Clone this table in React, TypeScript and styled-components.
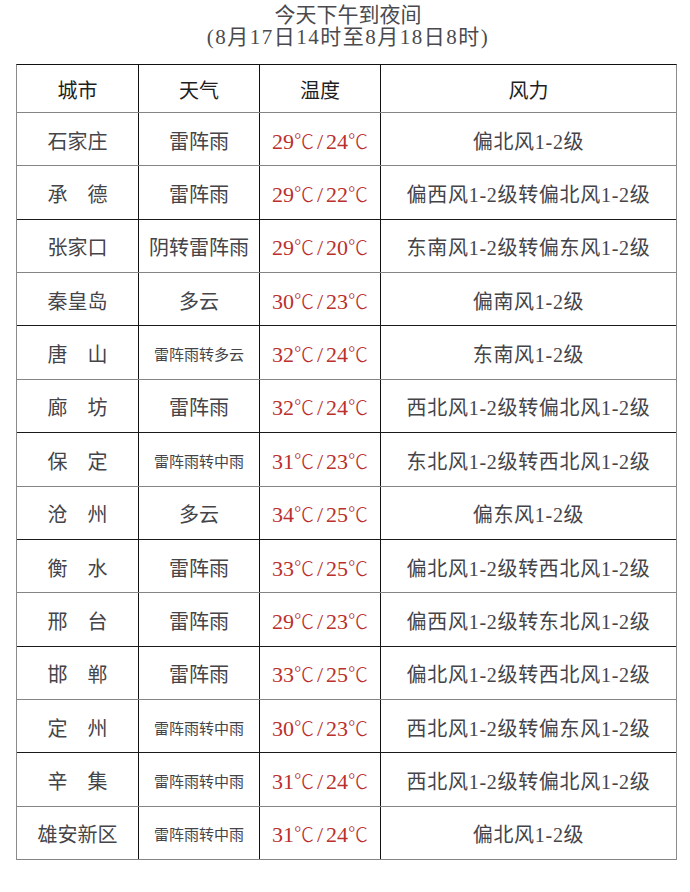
import React, { FC } from "react";
import styled, { createGlobalStyle } from "styled-components";

type Row = {
  city: string;
  weather: string;
  high: number;
  low: number;
  wind: string;
};

const rows: Row[] = [
  { city: "石家庄", weather: "雷阵雨", high: 29, low: 24, wind: "偏北风1-2级" },
  { city: "承　德", weather: "雷阵雨", high: 29, low: 22, wind: "偏西风1-2级转偏北风1-2级" },
  { city: "张家口", weather: "阴转雷阵雨", high: 29, low: 20, wind: "东南风1-2级转偏东风1-2级" },
  { city: "秦皇岛", weather: "多云", high: 30, low: 23, wind: "偏南风1-2级" },
  { city: "唐　山", weather: "雷阵雨转多云", high: 32, low: 24, wind: "东南风1-2级" },
  { city: "廊　坊", weather: "雷阵雨", high: 32, low: 24, wind: "西北风1-2级转偏北风1-2级" },
  { city: "保　定", weather: "雷阵雨转中雨", high: 31, low: 23, wind: "东北风1-2级转西北风1-2级" },
  { city: "沧　州", weather: "多云", high: 34, low: 25, wind: "偏东风1-2级" },
  { city: "衡　水", weather: "雷阵雨", high: 33, low: 25, wind: "偏北风1-2级转西北风1-2级" },
  { city: "邢　台", weather: "雷阵雨", high: 29, low: 23, wind: "偏西风1-2级转东北风1-2级" },
  { city: "邯　郸", weather: "雷阵雨", high: 33, low: 25, wind: "偏北风1-2级转西北风1-2级" },
  { city: "定　州", weather: "雷阵雨转中雨", high: 30, low: 23, wind: "西北风1-2级转偏东风1-2级" },
  { city: "辛　集", weather: "雷阵雨转中雨", high: 31, low: 24, wind: "西北风1-2级转偏北风1-2级" },
  { city: "雄安新区", weather: "雷阵雨转中雨", high: 31, low: 24, wind: "偏北风1-2级" },
];

const GlobalStyle = createGlobalStyle`
  body {
    margin: 0;
    background: #fff;
    font-family: "Liberation Serif", "Noto Sans CJK SC", serif;
    color: #3f3f44;
  }
`;

const Page = styled.div`
  width: 690px;
  height: 892px;
  overflow: hidden;
`;

const Title = styled.div`
  padding: 4px 0 0 6px;
  text-align: center;
  font-size: 21px;
  line-height: 22px;
  color: #4a4a4e;
`;

const SubTitle = styled.div`
  letter-spacing: 1.5px;
`;

const Table = styled.div`
  width: 661px;
  margin: 16px 0 0 16px;
  border-top: 1px solid #111;
  border-left: 1px solid #8a8a8a;
  border-right: 1px solid #8a8a8a;
  box-sizing: border-box;
`;

const TableRow = styled.div<{ $height: number; $dark?: boolean }>`
  display: grid;
  grid-template-columns: 121px 121px 121px 1fr;
  height: ${(p) => p.$height}px;
  box-sizing: border-box;
  border-bottom: 1px solid ${(p) => (p.$dark ? "#1a1a1a" : "#858585")};
`;

const Cell = styled.div<{ $small?: boolean; $red?: boolean; $head?: boolean; $wide?: boolean }>`
  display: flex;
  align-items: center;
  justify-content: center;
  padding-top: 2px;
  white-space: nowrap;
  font-size: ${(p) => (p.$small ? "15px" : "20px")};
  letter-spacing: ${(p) => (p.$wide ? "0.7px" : "0")};
  color: ${(p) => (p.$red ? "#bb2f2c" : p.$head ? "#1e1e1e" : "#444449")};
  & + & {
    border-left: 1px solid #111;
  }
`;

const Temp = styled.span`
  font-size: 22px;
`;

const Celsius = styled.span`
  font-family: "Noto Sans CJK SC", sans-serif;
  font-size: 20px;
  font-weight: 300;
`;

const Slash = styled.span`
  margin: 0 3px;
`;

const App: FC = () => {
  return (
    <Page>
      <GlobalStyle />
      <Title>
        <div>今天下午到夜间</div>
        <SubTitle>(8月17日14时至8月18日8时)</SubTitle>
      </Title>
      <Table>
        <TableRow $height={48}>
          <Cell $head>城市</Cell>
          <Cell $head>天气</Cell>
          <Cell $head>温度</Cell>
          <Cell $head>风力</Cell>
        </TableRow>
        {rows.map((r, i) => (
          <TableRow key={r.city} $height={53.36} $dark={i % 2 === 1 && i < rows.length - 1}>
            <Cell>{r.city}</Cell>
            <Cell $small={r.weather.length > 5}>{r.weather}</Cell>
            <Cell $red>
              <Temp>
                {r.high}
                <Celsius>℃</Celsius>
                <Slash>/</Slash>
                {r.low}
                <Celsius>℃</Celsius>
              </Temp>
            </Cell>
            <Cell $wide>{r.wind}</Cell>
          </TableRow>
        ))}
      </Table>
    </Page>
  );
};

export default App;
